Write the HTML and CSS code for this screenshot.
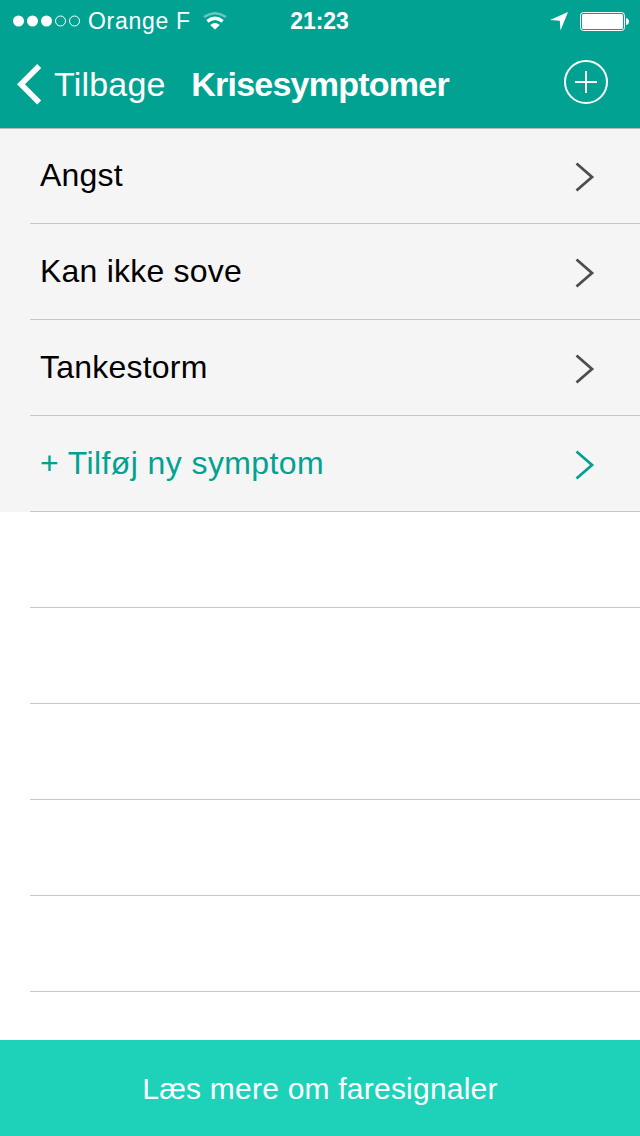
FILE: index.html
```html
<!DOCTYPE html>
<html lang="da">
<head>
<meta charset="utf-8">
<title>Krisesymptomer</title>
<link rel="stylesheet" href="styles.css">
</head>
<body>
<div class="screen">
  <header class="header">
    <div class="status">
      <div class="status-left">
        <svg class="signal" width="68" height="12" viewBox="0 0 68 12" fill="#fff">
          <circle cx="5.5" cy="6" r="5.5"/><circle cx="19.5" cy="6" r="5.5"/><circle cx="33.5" cy="6" r="5.5"/>
          <g fill="none" stroke="#fff"><circle cx="47.5" cy="6" r="5"/><circle cx="61.5" cy="6" r="5"/></g>
        </svg>
        <span class="carrier">Orange F</span>
        <svg class="wifi" width="24" height="18" viewBox="0 0 24 18" fill="none" stroke="#fff">
          <path d="M1 5.1Q12 -2.7 23 5.1" stroke-width="2.4" opacity=".4"/>
          <path d="M4.4 9.4Q12 3.3 19.6 9.4" stroke-width="3.4"/>
          <path d="M12 17.5L7.2 12.9Q12 9.3 16.8 12.9Z" fill="#fff" stroke="none"/>
        </svg>
      </div>
      <span class="clock">21:23</span>
      <div class="status-right">
        <svg width="18" height="19" viewBox="0 0 18 19" fill="#fff"><path d="M18 0L10.5 18.5L9.8 8.7L0 8Z"/></svg>
        <svg class="battery" width="49" height="19" viewBox="0 0 49 19">
          <rect x=".5" y=".5" width="44" height="18" rx="3" fill="none" stroke="#fff"/>
          <rect x="2" y="2" width="41" height="15" rx="1.5" fill="#fff"/>
          <path d="M46 6Q49 6.5 49 9.5T46 13Z" fill="#fff"/>
        </svg>
      </div>
    </div>
    <nav class="nav">
      <svg class="back-icon" width="25" height="42" viewBox="0 0 25 42" fill="none" stroke="#fff" stroke-width="5.6"><path d="M22.2 3L4 21.2L22.2 39.4"/></svg>
      <span class="back">Tilbage</span>
      <h1 class="title">Krisesymptomer</h1>
      <svg class="add" width="44" height="44" viewBox="0 0 44 44" fill="none" stroke="#fff" stroke-width="2"><circle cx="22" cy="22" r="21"/><path d="M11 22H33M22 11V33"/></svg>
    </nav>
  </header>
  <main class="list">
    <div class="row filled first"><div class="cell"><span>Angst</span><svg class="chevron" width="20" height="30" viewBox="0 0 20 30"><path d="M1.5 1.5L17 15L1.5 28.5"/></svg></div></div>
    <div class="row filled"><div class="cell"><span>Kan ikke sove</span><svg class="chevron" width="20" height="30" viewBox="0 0 20 30"><path d="M1.5 1.5L17 15L1.5 28.5"/></svg></div></div>
    <div class="row filled"><div class="cell"><span>Tankestorm</span><svg class="chevron" width="20" height="30" viewBox="0 0 20 30"><path d="M1.5 1.5L17 15L1.5 28.5"/></svg></div></div>
    <div class="row filled new"><div class="cell"><span>+ Tilføj ny symptom</span><svg class="chevron" width="20" height="30" viewBox="0 0 20 30"><path d="M1.5 1.5L17 15L1.5 28.5"/></svg></div></div>
    <div class="row"><div class="cell"></div></div>
    <div class="row"><div class="cell"></div></div>
    <div class="row"><div class="cell"></div></div>
    <div class="row"><div class="cell"></div></div>
    <div class="row"><div class="cell"></div></div>
  </main>
  <footer class="footer"><span>Læs mere om faresignaler</span></footer>
</div>
</body>
</html>
```
FILE: styles.css
```css
* { box-sizing: border-box; }
body { margin: 0; font-family: "Liberation Sans", Arial, sans-serif; }
svg { display: block; flex: none; }
.screen { width: 640px; height: 1136px; display: flex; flex-direction: column; background: #fff; overflow: hidden; }
.header { height: 128px; flex: none; background: #02a292; color: #fff; }
.status { height: 40px; padding: 2px 11px 0 13px; display: grid; grid-template-columns: 1fr auto 1fr; align-items: center; font-size: 23px; line-height: 38px; }
.status-left, .status-right { display: flex; align-items: center; }
.status-right { justify-content: flex-end; gap: 12px; }
.carrier { margin-left: 7px; letter-spacing: .7px; white-space: nowrap; }
.wifi { margin-left: 12px; }
.clock { padding-right: 3px; font-weight: bold; letter-spacing: -.1px; }
.nav { height: 88px; padding: 0 32px 0 17px; display: flex; align-items: center; font-size: 34px; line-height: 88px; }
.back { margin-left: 12px; letter-spacing: .2px; }
.title { margin: 0 0 0 25.5px; font-size: 34px; font-weight: bold; letter-spacing: -.75px; }
.add { margin: 0 0 4px auto; }
.list { flex: 1; }
.row { height: 96px; padding-left: 30px; }
.filled { background: #f5f5f5; }
.first { box-shadow: inset 0 1px #b4b9b8; }
.cell { height: 96px; padding: 0 45px 0 10px; display: flex; align-items: center; justify-content: space-between; border-bottom: 1px solid #c8c7cc; font-size: 32px; color: #000; }
.cell span { line-height: 94px; padding-bottom: 1px; letter-spacing: .22px; }
.chevron { margin-top: 3px; fill: none; stroke: #4d4d4d; stroke-width: 2.8; }
.new .cell { color: #02a292; }
.new .cell span { letter-spacing: .4px; }
.new .chevron { stroke: #02a292; }
.footer { height: 96px; flex: none; background: #1ed2ba; color: #fff; text-align: center; font-size: 30px; line-height: 97px; letter-spacing: .22px; }
```
